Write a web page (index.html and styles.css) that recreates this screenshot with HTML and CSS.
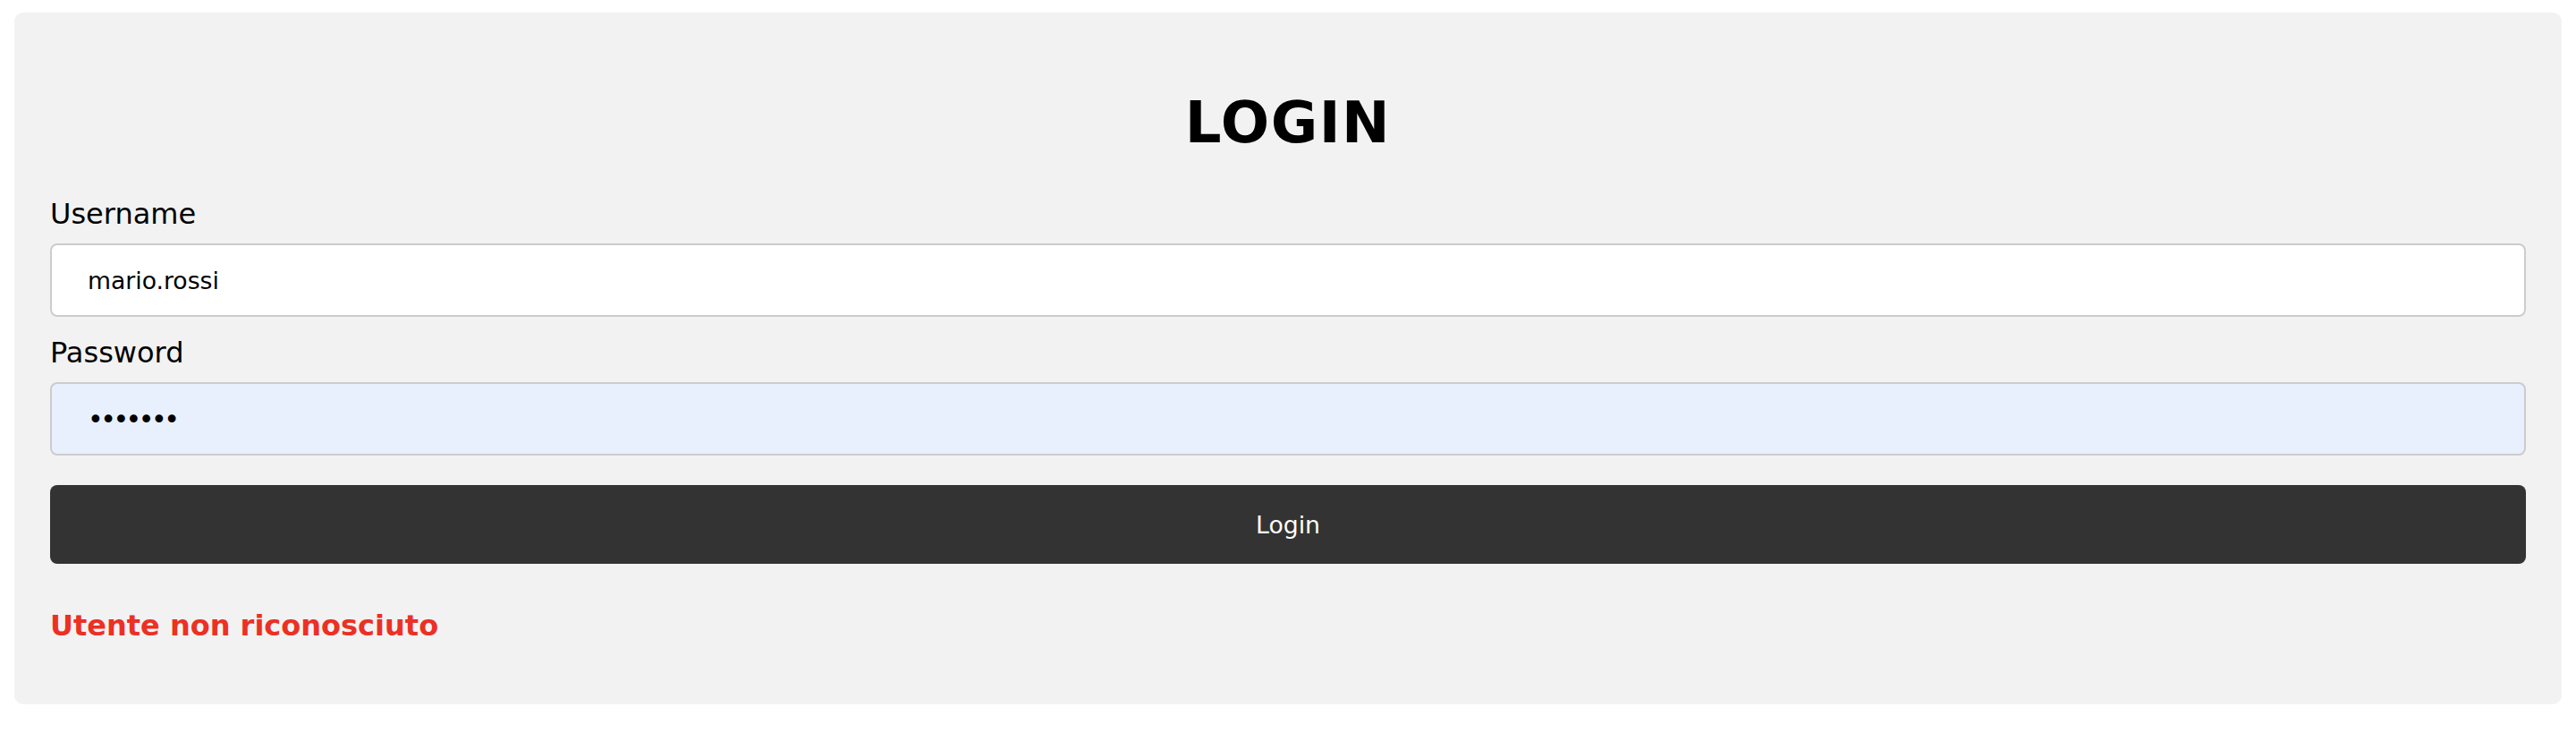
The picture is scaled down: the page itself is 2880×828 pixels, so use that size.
FILE: index.html
```html
<!DOCTYPE html>
<html lang="it">
<head>
<meta charset="utf-8">
<title>Login</title>
<link rel="stylesheet" href="styles.css">
</head>
<body>
<div class="card">
  <h1 class="title">LOGIN</h1>
  <form class="form">
    <label class="label" for="user">Username</label>
    <input class="field" id="user" type="text" value="mario.rossi">
    <label class="label" for="pass">Password</label>
    <input class="field field-autofill" id="pass" type="password" value="1234567">
    <button class="btn" type="button">Login</button>
  </form>
  <p class="error">Utente non riconosciuto</p>
</div>
</body>
</html>
```

FILE: styles.css
```css
html, body {
  margin: 0;
  padding: 0;
  background: #ffffff;
}
body {
  padding: 14px 16px;
  font-family: "DejaVu Sans", Verdana, sans-serif;
  color: #000;
}
.card {
  background: #f2f2f2;
  border-radius: 10px;
  padding: 40px 40px 40px 40px;
  height: 773px;
  box-sizing: border-box;
}
.title {
  margin: 46px 0 0 0;
  font-size: 64px;
  line-height: 74px;
  font-weight: bold;
  text-align: center;
  letter-spacing: 1.5px;
}
.form {
  display: flex;
  flex-direction: column;
  margin: 0;
}
.label {
  font-size: 32px;
  line-height: 38px;
  margin-top: 46px;
  margin-bottom: 14px;
}
.field + .label {
  margin-top: 21px;
}
.field {
  box-sizing: border-box;
  height: 82px;
  width: 100%;
  border: 2px solid #cccccc;
  border-radius: 8px;
  background: #ffffff;
  padding: 0 40px;
  font-family: "DejaVu Sans", Verdana, sans-serif;
  font-size: 26.67px;
  color: #000;
  outline: none;
  margin: 0;
}
.field-autofill {
  background: #e8f0fe;
  font-size: 30px;
  letter-spacing: -3.5px;
}
.btn {
  margin-top: 33px;
  height: 88px;
  width: 100%;
  border: none;
  border-radius: 8px;
  background: #333333;
  color: #ffffff;
  font-family: "DejaVu Sans", Verdana, sans-serif;
  font-size: 26.67px;
  cursor: pointer;
}
.error {
  margin: 50px 0 0 0;
  font-size: 32px;
  line-height: 38px;
  font-weight: bold;
  color: #ec3024;
}
```
